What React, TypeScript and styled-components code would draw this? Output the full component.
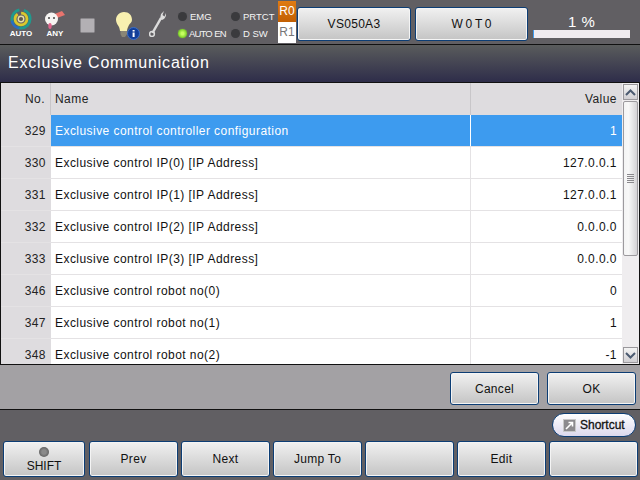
import React from "react";
import styled, { createGlobalStyle } from "styled-components";

const GlobalStyle = createGlobalStyle`
  html, body {
    margin: 0;
    padding: 0;
    background: #615f63;
  }
  body {
    font-family: "Liberation Sans", Arial, sans-serif;
  }
`;

const Screen = styled.div`
  width: 640px;
  height: 480px;
  display: flex;
  flex-direction: column;
  overflow: hidden;
  background: #615f63;
`;

const TopBar = styled.div`
  height: 44px;
  display: flex;
  align-items: flex-start;
  background: #615f63;
  border-bottom: 1px solid #111;
  flex: none;
`;

const IconSlot = styled.div<{ $w: number; $pb: number }>`
  width: ${(p) => p.$w}px;
  height: 44px;
  display: flex;
  flex-direction: column;
  align-items: center;
  justify-content: flex-end;
  padding-bottom: ${(p) => p.$pb}px;
  box-sizing: border-box;
  flex: none;
`;

const IconCaption = styled.span`
  color: #fff;
  font-size: 8px;
  font-weight: 700;
  line-height: 8px;
`;

const StatusGrid = styled.div`
  display: grid;
  grid-template-columns: 53px 47px;
  grid-auto-rows: 17px;
  padding-top: 8px;
  margin-left: 12px;
  width: 100px;
  flex: none;
`;

const Status = styled.div`
  display: flex;
  align-items: center;
  gap: 3px;
  color: #f4f4f4;
  font-size: 9.5px;
  white-space: nowrap;
`;

const TightStatus = styled(Status)`
  gap: 2px;
  letter-spacing: -0.9px;
  word-spacing: 1px;
`;

const Lamp = styled.span<{ $on?: boolean }>`
  width: 9px;
  height: 9px;
  border-radius: 50%;
  flex: none;
  background: ${(p) =>
    p.$on ? "radial-gradient(circle, #c6ff60 20%, #6fc81e 75%)" : "#3a3a3d"};
  box-shadow: 0 0 1px 0 ${(p) => (p.$on ? "#9bd04f" : "#55555a")};
`;

const RobotTabs = styled.div`
  width: 18px;
  height: 43px;
  padding-top: 1px;
  display: flex;
  flex-direction: column;
  flex: none;
`;

const RobotTab = styled.div<{ $active?: boolean }>`
  height: 21px;
  background: ${(p) => (p.$active ? "linear-gradient(#e07b12, #c25f02)" : "#fff")};
  color: ${(p) => (p.$active ? "#fff" : "#777")};
  font-size: 12px;
  line-height: 21px;
  text-align: center;
`;

const Btn = styled.button<{ $w: number; $h: number }>`
  width: ${(p) => p.$w}px;
  height: ${(p) => p.$h}px;
  box-sizing: border-box;
  flex: none;
  padding: 0;
  border: 1px solid #0c3d74;
  border-radius: 3px;
  box-shadow: inset 0 0 0 1px #f4f4f4;
  background: linear-gradient(#f1f1f1, #c4c4c4);
  color: #111;
  font-family: inherit;
  font-size: 12px;
  letter-spacing: 0.3px;
`;

const TopButtons = styled.div`
  display: flex;
  gap: 4px;
  padding-top: 7px;
  margin-left: 1px;
`;

const SpacedBtn = styled(Btn)`
  letter-spacing: 0;
  word-spacing: -0.5px;
`;

const LoadBox = styled.div`
  width: 97px;
  margin-left: 5px;
  padding-top: 14px;
  flex: none;
  text-align: center;
`;

const LoadText = styled.div`
  color: #fff;
  font-size: 15px;
  line-height: 16px;
  height: 16px;
  word-spacing: 1px;
`;

const LoadTrack = styled.div`
  height: 8px;
  background: #f0ecf0;
`;

const LoadFill = styled.div`
  height: 100%;
  background: #3f9cf0;
`;

const TitleBand = styled.div`
  height: 37px;
  flex: none;
  box-sizing: border-box;
  padding: 8px 0 0 8px;
  background: linear-gradient(#5a5c5c, #2e2d4a);
  color: #fff;
  font-size: 16px;
  line-height: 20px;
  letter-spacing: 0.8px;
`;

const TableFrame = styled.div`
  height: 283px;
  flex: none;
  box-sizing: border-box;
  display: flex;
  background: #fff;
  border: 1px solid #111;
`;

const TableBody = styled.div`
  width: 621px;
  flex: none;
  overflow: hidden;
`;

const COLUMNS = "50px 420px 151px";

const HeadRow = styled.div`
  height: 32px;
  display: grid;
  grid-template-columns: ${COLUMNS};
  background: #dedcdf;
  color: #222;
  font-size: 12px;
  line-height: 32px;
  letter-spacing: 0.45px;
`;

const HeadCell = styled.div<{ $right?: boolean; $last?: boolean }>`
  box-sizing: border-box;
  padding: 0 ${(p) => (p.$right ? "5px" : "0")} 0 ${(p) => (p.$right ? "0" : "4px")};
  text-align: ${(p) => (p.$right ? "right" : "left")};
  border-right: ${(p) => (p.$last ? "none" : "1px solid #c8c6c9")};
`;

const Row = styled.div<{ $selected?: boolean }>`
  height: 32px;
  box-sizing: border-box;
  display: grid;
  grid-template-columns: ${COLUMNS};
  grid-template-rows: 31px;
  border-bottom: 1px solid #e4e2e4;
  font-size: 12px;
  line-height: 32px;
  letter-spacing: 0.45px;
  color: ${(p) => (p.$selected ? "#fff" : "#111")};
`;

const NoCell = styled.div`
  background: #dedcdf;
  color: #222;
  text-align: right;
  padding-right: 5px;
`;

const NameCell = styled.div<{ $selected?: boolean }>`
  background: ${(p) => (p.$selected ? "#3d9bef" : "#fff")};
  padding-left: 4px;
  border-right: 1px solid ${(p) => (p.$selected ? "#fff" : "#e4e2e4")};
  white-space: nowrap;
`;

const ValueCell = styled.div<{ $selected?: boolean }>`
  background: ${(p) => (p.$selected ? "#3d9bef" : "#fff")};
  text-align: right;
  padding-right: 5px;
`;

const ScrollBar = styled.div`
  width: 17px;
  flex: none;
  display: flex;
  flex-direction: column;
  align-items: center;
  background: #efedef;
`;

const ScrollArrow = styled.div`
  width: 15px;
  height: 16px;
  margin: 1px 0;
  box-sizing: border-box;
  display: flex;
  align-items: center;
  justify-content: center;
  flex: none;
  border: 1px solid #9a989c;
  background: linear-gradient(#f4f4f4, #d0ced2);
`;

const ScrollThumb = styled.div`
  width: 15px;
  height: 155px;
  box-sizing: border-box;
  border: 1px solid #9c9a9e;
  border-radius: 2px;
  background: linear-gradient(90deg, #f4f4f4, #f8f8f8 35%, #d4d2d5);
  display: flex;
  flex-direction: column;
  justify-content: center;
  align-items: center;
  gap: 1px;
  flex: none;
`;

const Grip = styled.span`
  width: 7px;
  height: 1px;
  background: #8a888c;
`;

const ScrollTrack = styled.div`
  flex: 1;
`;

const ActionPanel = styled.div`
  height: 44px;
  flex: none;
  display: flex;
  justify-content: flex-end;
  gap: 8px;
  padding: 7px 4px 0 0;
  box-sizing: border-box;
  background: #a3a1a4;
`;

const BottomArea = styled.div`
  flex: 1;
  display: flex;
  flex-direction: column;
  background: #615f63;
  border-top: 1px solid #111;
`;

const ShortcutRow = styled.div`
  height: 31px;
  flex: none;
  display: flex;
  justify-content: flex-end;
  padding: 3px 4px 0 0;
  box-sizing: border-box;
`;

const ShortcutButton = styled.button`
  width: 84px;
  height: 24px;
  box-sizing: border-box;
  padding: 0 0 0 10px;
  display: flex;
  align-items: center;
  gap: 4px;
  border: 1px solid #0c3d74;
  border-radius: 12px;
  background: linear-gradient(#ffffff, #dcd8ec);
  color: #111;
  font-family: inherit;
`;

const ShortcutLabel = styled.span`
  font-size: 12px;
  -webkit-text-stroke: 0.3px #111;
`;

const FunctionRow = styled.div`
  display: flex;
  gap: 3px;
  padding-left: 3px;
`;

const ShiftLed = styled.span`
  display: block;
  width: 10px;
  height: 10px;
  margin: 0 auto 3px;
  border-radius: 50%;
  background: radial-gradient(circle, #8a8a8a 30%, #555 85%);
`;

const ShiftButton = styled(Btn)`
  margin-right: 1px;
  padding-top: 2px;
  line-height: 13px;
  letter-spacing: 0;
`;

const AutoIcon = () => (
  <svg width="22" height="22" viewBox="0 0 24 24">
    <circle cx="12" cy="12" r="10" fill="none" stroke="#1f9a8e" strokeWidth="3" strokeDasharray="20 5" />
    <path d="M2 14a10 10 0 0 0 8 8" fill="none" stroke="#2a6cc4" strokeWidth="2.500" />
    <circle cx="12" cy="12" r="6.500" fill="none" stroke="#d9c92e" strokeWidth="3" strokeDasharray="26 4" />
    <circle cx="12" cy="12" r="3" fill="#5e5a50" stroke="#e6e0a8" strokeWidth="1.500" />
  </svg>
);

const AnyIcon = () => (
  <svg width="22" height="20" viewBox="0 0 22 20">
    <path d="M8 5 L18 1 L21 5 L13 8 Z" fill="#e8746e" />
    <circle cx="7.500" cy="9" r="6.500" fill="#f6f4f2" />
    <circle cx="5" cy="8" r="1" fill="#444" />
    <circle cx="10" cy="8" r="1" fill="#444" />
    <ellipse cx="6" cy="16" rx="1.700" ry="3" fill="#e0648c" />
  </svg>
);

const StopIcon = () => (
  <svg width="15" height="15" viewBox="0 0 15 15">
    <rect x="0.500" y="0.500" width="14" height="14" rx="1" fill="#b3b0b4" stroke="#8a888c" />
  </svg>
);

const BulbIcon = () => (
  <svg width="25" height="28" viewBox="0 0 25 28">
    <path d="M9 0C4 0 1 4 1 8c0 3 2 5 3 7 .5 1.500 1 3 1 4h7c0-2 1-4 2-6 1-1.500 3-3 3-5 0-5-3-8-8-8z" fill="#f8f0b0" />
    <path d="M5.500 19h6.500v3l-2 3h-3l-1.500-3z" fill="#8a8676" />
    <circle cx="18.500" cy="21.500" r="6" fill="#123f9a" stroke="#3b6fc8" />
    <rect x="17.600" y="20.500" width="2" height="4.500" fill="#fff" />
    <rect x="17.600" y="18" width="2" height="1.500" fill="#fff" />
  </svg>
);

const WrenchIcon = () => (
  <svg width="17" height="26" viewBox="0 0 17 26">
    <path d="M3.500 22 L12 7" stroke="#dcdcdc" strokeWidth="2.500" />
    <path d="M11 8 L12 3 L15 0 L13.500 4 L15.500 5.500 L17 2 C17.500 5 16 8 13 9 Z" fill="#dcdcdc" />
    <circle cx="3" cy="23" r="2.400" fill="none" stroke="#dcdcdc" strokeWidth="1.500" />
  </svg>
);

const ArrowGlyph = ({ up }: { up?: boolean }) => (
  <svg width="11" height="7" viewBox="0 0 11 7">
    <path d={up ? "M1 6 L5.500 1.500 L10 6" : "M1 1 L5.500 5.500 L10 1"} fill="none" stroke="#4b5a70" strokeWidth="2" />
  </svg>
);

const ShortcutGlyph = () => (
  <svg width="13" height="13" viewBox="0 0 13 13">
    <rect x="0.500" y="0.500" width="12" height="12" fill="#8c8a8e" stroke="#c8c8c8" />
    <path d="M3 10 L9 4 M5.500 3.500 H9.500 V7.500" fill="none" stroke="#fff" strokeWidth="1.600" />
  </svg>
);

const rows = [
  { no: 329, name: "Exclusive control controller configuration", value: "1", selected: true },
  { no: 330, name: "Exclusive control IP(0) [IP Address]", value: "127.0.0.1" },
  { no: 331, name: "Exclusive control IP(1) [IP Address]", value: "127.0.0.1" },
  { no: 332, name: "Exclusive control IP(2) [IP Address]", value: "0.0.0.0" },
  { no: 333, name: "Exclusive control IP(3) [IP Address]", value: "0.0.0.0" },
  { no: 346, name: "Exclusive control robot no(0)", value: "0" },
  { no: 347, name: "Exclusive control robot no(1)", value: "1" },
  { no: 348, name: "Exclusive control robot no(2)", value: "-1" },
];

export default function App() {
  return (
    <Screen>
      <GlobalStyle />
      <TopBar>
        <IconSlot $w={42} $pb={6}>
          <AutoIcon />
          <IconCaption>AUTO</IconCaption>
        </IconSlot>
        <IconSlot $w={26} $pb={6}>
          <AnyIcon />
          <IconCaption>ANY</IconCaption>
        </IconSlot>
        <IconSlot $w={38} $pb={11}>
          <StopIcon />
        </IconSlot>
        <IconSlot $w={42} $pb={4}>
          <BulbIcon />
        </IconSlot>
        <IconSlot $w={18} $pb={7}>
          <WrenchIcon />
        </IconSlot>
        <StatusGrid>
          <Status><Lamp />EMG</Status>
          <Status><Lamp />PRTCT</Status>
          <TightStatus><Lamp $on />AUTO EN</TightStatus>
          <Status><Lamp />D SW</Status>
        </StatusGrid>
        <RobotTabs>
          <RobotTab $active>R0</RobotTab>
          <RobotTab>R1</RobotTab>
        </RobotTabs>
        <TopButtons>
          <Btn $w={114} $h={34}>VS050A3</Btn>
          <SpacedBtn $w={113} $h={34}>W 0 T 0</SpacedBtn>
        </TopButtons>
        <LoadBox>
          <LoadText>1 %</LoadText>
          <LoadTrack>
            <LoadFill style={{ width: "1%" }} />
          </LoadTrack>
        </LoadBox>
      </TopBar>
      <TitleBand>Exclusive Communication</TitleBand>
      <TableFrame>
        <TableBody>
          <HeadRow>
            <HeadCell $right>No.</HeadCell>
            <HeadCell>Name</HeadCell>
            <HeadCell $right $last>Value</HeadCell>
          </HeadRow>
          {rows.map((r) => (
            <Row key={r.no} $selected={r.selected}>
              <NoCell>{r.no}</NoCell>
              <NameCell $selected={r.selected}>{r.name}</NameCell>
              <ValueCell $selected={r.selected}>{r.value}</ValueCell>
            </Row>
          ))}
        </TableBody>
        <ScrollBar>
          <ScrollArrow><ArrowGlyph up /></ScrollArrow>
          <ScrollThumb><Grip /><Grip /><Grip /><Grip /><Grip /></ScrollThumb>
          <ScrollTrack />
          <ScrollArrow><ArrowGlyph /></ScrollArrow>
        </ScrollBar>
      </TableFrame>
      <ActionPanel>
        <Btn $w={89} $h={33}>Cancel</Btn>
        <Btn $w={89} $h={33}>OK</Btn>
      </ActionPanel>
      <BottomArea>
        <ShortcutRow>
          <ShortcutButton>
            <ShortcutGlyph />
            <ShortcutLabel>Shortcut</ShortcutLabel>
          </ShortcutButton>
        </ShortcutRow>
        <FunctionRow>
          <ShiftButton $w={82} $h={36}>
            <ShiftLed />
            SHIFT
          </ShiftButton>
          <Btn $w={89} $h={36}>Prev</Btn>
          <Btn $w={89} $h={36}>Next</Btn>
          <Btn $w={89} $h={36}>Jump To</Btn>
          <Btn $w={89} $h={36} />
          <Btn $w={89} $h={36}>Edit</Btn>
          <Btn $w={89} $h={36} />
        </FunctionRow>
      </BottomArea>
    </Screen>
  );
}
